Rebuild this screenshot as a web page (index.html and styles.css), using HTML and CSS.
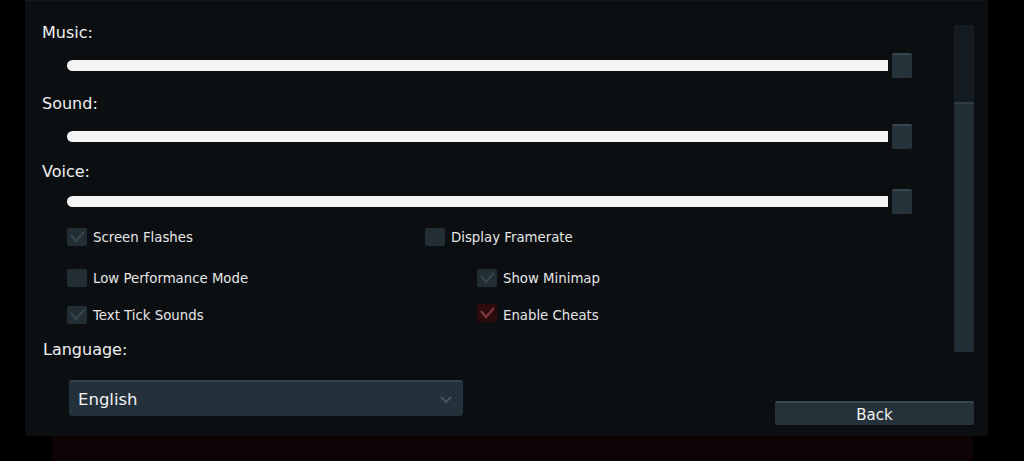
FILE: index.html
```html
<!DOCTYPE html>
<html>
<head>
    <meta charset="UTF-8">
    <title>Options</title>
    <link rel="stylesheet" href="styles.css">
</head>
<body>

<div id="options">
    <div class="settings">
        <div class="label">Music:</div>
        <div class="slider first"><div class="track"></div><div class="handle"></div></div>

        <div class="label sound">Sound:</div>
        <div class="slider"><div class="track"></div><div class="handle"></div></div>

        <div class="label voice">Voice:</div>
        <div class="slider last"><div class="track"></div><div class="handle"></div></div>

        <div class="toggles">
            <div class="row first">
                <label class="toggle"><span class="box checked"><svg viewBox="0 0 20 18"><polyline points="4,7 9,13 17,4" /></svg></span>Screen Flashes</label>
                <label class="toggle right near"><span class="box"></span>Display Framerate</label>
            </div>
            <div class="row second">
                <label class="toggle"><span class="box"></span>Low Performance Mode</label>
                <label class="toggle right"><span class="box checked"><svg viewBox="0 0 20 18"><polyline points="4,7 9,13 17,4" /></svg></span>Show Minimap</label>
            </div>
            <div class="row third">
                <label class="toggle"><span class="box checked"><svg viewBox="0 0 20 18"><polyline points="4,7 9,13 17,4" /></svg></span>Text Tick Sounds</label>
                <label class="toggle right"><span class="box checked cheat"><svg viewBox="0 0 20 18"><polyline points="4,7 9,13 17,4" /></svg></span>Enable Cheats</label>
            </div>
        </div>

        <div class="label language">Language:</div>
    </div>

    <div class="scrollbar"><div class="thumb"></div></div>

    <div class="footer">
        <div class="dropdown">
            <span>English</span>
            <svg class="chevron" viewBox="0 0 14 10"><polyline points="2,2 7,7 12,2" /></svg>
        </div>
        <button class="back">Back</button>
    </div>
</div>
<div id="backdrop"></div>

</body>
</html>
```

FILE: styles.css
```css
html, body {
    margin: 0;
    height: 461px;
    overflow: hidden;
    background: #000;
    font-family: "DejaVu Sans", sans-serif;
    color: #efefef;
}

#options {
    margin-left: 25px;
    width: 963px;
    height: 436px;
    box-sizing: border-box;
    padding-right: 14px;
    background: #0c0f12;
    border-top: 1px solid #14181c;
    border-radius: 0 0 3px 3px;
    box-shadow: 0 2px 6px rgba(0, 0, 0, 0.8);
    display: grid;
    grid-template-columns: 1fr 20px;
    align-content: start;
}

#backdrop {
    margin-left: 52px;
    width: 921px;
    height: 25px;
    background: #0d0305;
}

.settings {
    padding: 23px 0 0 17px;
}

.label {
    font-size: 16px;
    line-height: 18px;
}

.label.sound {
    margin-top: 17px;
}

.label.voice {
    margin-top: 14px;
}

.label.language {
    margin: 16px 0 0 1px;
}

.slider {
    margin: 11px 0 0 25px;
    width: 845px;
    height: 25px;
    display: flex;
    align-items: center;
}

.slider.last {
    margin-top: 8px;
}

.slider .track {
    flex: 1;
    height: 11px;
    background: #f4f4f4;
    border-radius: 6px 0 0 6px;
}

.slider .handle {
    margin-left: 4px;
    width: 20px;
    height: 23px;
    background: #27333a;
    border-top: 2px solid #37454d;
    border-radius: 2px;
}

/* checkbox rows */
.toggles {
    margin-left: 25px;
}

.row {
    display: flex;
    height: 20px;
    align-items: center;
}

.row.first {
    margin-top: 13px;
}

.row.second {
    margin-top: 21px;
}

.row.third {
    margin-top: 17px;
}

.toggle {
    display: flex;
    align-items: center;
    width: 358px;
    font-size: 13.3px;
    color: #e6e6e6;
}

.toggle.right {
    margin-left: 52px;
}

.toggle.right.near {
    margin-left: 0;
}

.box {
    width: 20px;
    height: 18px;
    margin-right: 6px;
    background: #222d34;
    border-radius: 2px;
}

.box svg {
    display: block;
    width: 20px;
    height: 18px;
}

.box polyline {
    fill: none;
    stroke: #36454e;
    stroke-width: 2.2;
}

.box.cheat {
    background: #2c0b0d;
    margin-top: -5px;
}

.box.cheat polyline {
    stroke: #7a3838;
}

/* scrollbar */
.scrollbar {
    margin-top: 24px;
    height: 327px;
    background: #151c21;
    border-radius: 2px;
    display: flex;
    flex-direction: column;
    justify-content: flex-end;
}

.scrollbar .thumb {
    height: 248px;
    background: #222e35;
    border-top: 2px solid #2f3c44;
    border-radius: 2px;
}

/* language + back */
.footer {
    grid-column: 1 / 3;
    margin-top: 21px;
    padding-left: 44px;
    display: flex;
    justify-content: space-between;
    align-items: flex-start;
}

.dropdown {
    width: 394px;
    height: 36px;
    box-sizing: border-box;
    padding: 1px 10px 0 9px;
    background: #24313a;
    border-top: 2px solid #33424b;
    border-radius: 3px;
    display: flex;
    align-items: center;
    justify-content: space-between;
    font-size: 16.5px;
    color: #f2f2f2;
}

.chevron {
    width: 14px;
    height: 10px;
}

.chevron polyline {
    fill: none;
    stroke: #465660;
    stroke-width: 2;
}

.back {
    margin-top: 21px;
    width: 199px;
    height: 24px;
    padding: 1px 0 0;
    background: #25323a;
    border: none;
    border-top: 2px solid #3a4850;
    border-radius: 2px;
    font-family: "DejaVu Sans", sans-serif;
    font-size: 15px;
    color: #efefef;
}
```
